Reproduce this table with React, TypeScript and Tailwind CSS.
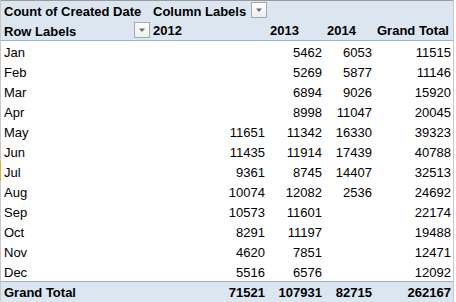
import React from "react";

const rows: [string, string, string, string, string][] = [
  ["Jan", "", "5462", "6053", "11515"],
  ["Feb", "", "5269", "5877", "11146"],
  ["Mar", "", "6894", "9026", "15920"],
  ["Apr", "", "8998", "11047", "20045"],
  ["May", "11651", "11342", "16330", "39323"],
  ["Jun", "11435", "11914", "17439", "40788"],
  ["Jul", "9361", "8745", "14407", "32513"],
  ["Aug", "10074", "12082", "2536", "24692"],
  ["Sep", "10573", "11601", "", "22174"],
  ["Oct", "8291", "11197", "", "19488"],
  ["Nov", "4620", "7851", "", "12471"],
  ["Dec", "5516", "6576", "", "12092"],
];

const grid = "grid grid-cols-[150px_117px_57px_50px_79px]";

function Drop() {
  return (
    <div className="w-[16px] h-[16px] border border-[#a8a8a8] bg-gradient-to-b from-[#ffffff] to-[#eceef0] flex items-center justify-center">
      <svg width="8" height="5" viewBox="0 0 8 5">
        <polygon points="1,0.5 7,0.5 4,4" fill="#6b6b6b" />
      </svg>
    </div>
  );
}

export default function App() {
  return (
    <div
      className="w-[456px] h-[302px] bg-white text-black text-[13px] overflow-hidden"
      style={{ fontFamily: '"Liberation Sans", Arial, sans-serif' }}
    >
      <div className="w-[454px] border-l border-r border-[#c8c8c8]">
        {/* header */}
        <div className="bg-[#dce6f1] border-t border-[#9a9a9a] border-b border-b-[#95b3d7] font-bold">
          <div className={`${grid} h-[19px] overflow-visible`}>
            <div className="pl-[3px] leading-[20px] pt-[1px] whitespace-nowrap">Count of Created Date</div>
            <div className="pl-[2px] flex items-start gap-0 whitespace-nowrap">
              <span className="leading-[20px] pt-[1px] w-[98px]">Column Labels</span>
              <div className="mt-[1px]">
                <Drop />
              </div>
            </div>
            <div />
            <div />
            <div />
          </div>
          <div className={`${grid} h-[20px]`}>
            <div className="pl-[3px] flex items-start">
              <span className="leading-[20px] pt-[2px] w-[130px]">Row Labels</span>
              <div className="mt-[2px]">
                <Drop />
              </div>
            </div>
            <div className="pl-[2px] leading-[18px] pt-[2px]">2012</div>
            <div className="pl-[2px] leading-[18px] pt-[2px]">2013</div>
            <div className="pl-[2px] leading-[18px] pt-[2px]">2014</div>
            <div className="pl-[2px] leading-[18px] pt-[2px] whitespace-nowrap">Grand Total</div>
          </div>
        </div>
        {/* body */}
        {rows.map((r) => (
          <div
            key={r[0]}
            className={`${grid} h-[20px] leading-[18px] ${r[0] === "Jul" ? "-ml-px border-l border-[#e8a93a]" : ""}`}
          >
            <div className="pl-[3px] pt-[3px]">{r[0]}</div>
            <div className="pr-[3px] pt-[3px] text-right">{r[1]}</div>
            <div className="pr-[3px] pt-[3px] text-right">{r[2]}</div>
            <div className="pr-[3px] pt-[3px] text-right">{r[3]}</div>
            <div className="pr-[3px] pt-[3px] text-right">{r[4]}</div>
          </div>
        ))}
        {/* grand total */}
        <div className={`${grid} h-[21px] leading-[18px] bg-[#dce6f1] border-t border-[#95b3d7] font-bold`}>
          <div className="pl-[3px] pt-[2px]">Grand Total</div>
          <div className="pr-[3px] pt-[2px] text-right">71521</div>
          <div className="pr-[3px] pt-[2px] text-right">107931</div>
          <div className="pr-[3px] pt-[2px] text-right">82715</div>
          <div className="pr-[3px] pt-[2px] text-right">262167</div>
        </div>
      </div>
    </div>
  );
}
